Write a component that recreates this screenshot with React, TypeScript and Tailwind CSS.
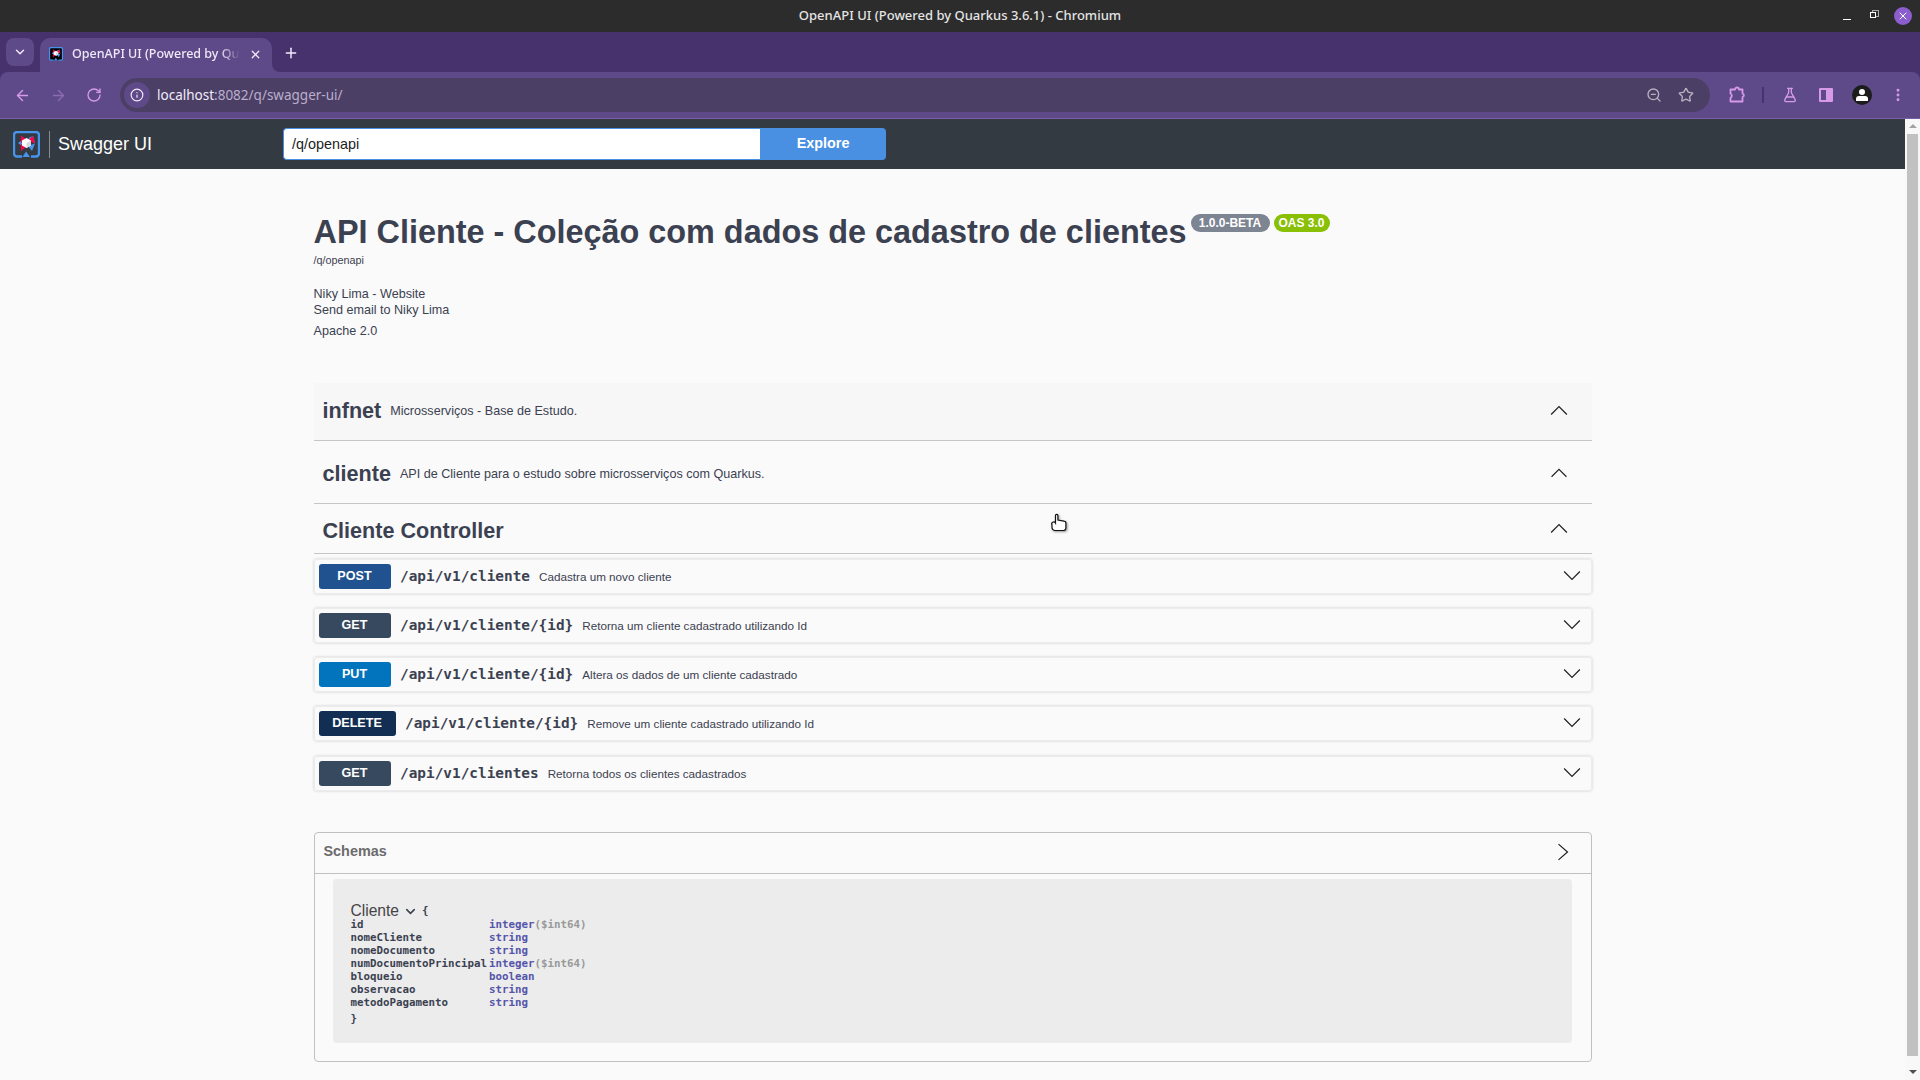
import React from 'react';
import { ArrowLeft, ArrowRight, ChevronDown, Info, MoreVertical, Plus, RotateCw, Star, X, FlaskConical, ZoomOut } from 'lucide-react';

const SANS = 'font-["Liberation_Sans",Arial,sans-serif]';
const MONO = 'font-["DejaVu_Sans_Mono",monospace]';

function QuarkusLogo({ size, fill = 'none' }: { size: number; fill?: string }) {
  return (
    <svg width={size} height={size} viewBox="0 0 27 27">
      <path d="M9 25.5 H4 a3 3 0 0 1 -3 -3 V4 a3 3 0 0 1 3 -3 H23 a3 3 0 0 1 3 3 V22.5 a3 3 0 0 1 -3 3 H18" fill={fill} stroke="#4695eb" strokeWidth="2.4" />
      <path d="M9.5 26 L13 20.5 L17 26 Z" fill="#4695eb" />
      <path d="M5 12 L12 7 V17 Z" fill="#4695eb" />
      <path d="M15 7 L20 5 L22 12 Z" fill="#4695eb" />
      <path d="M8 4.5 L14 9 L8 12 Z" fill="#ff004a" />
      <path d="M22 12.5 L15 9 L20 5 Z" fill="#ff004a" />
      <path d="M8 20 L14 15 L8 13 Z" fill="#ff004a" />
      <path d="M22 12.5 L15 15 L19 20 Z" fill="#4695eb" />
      <path d="M13.5 7 L18 9.5 V14.5 L13.5 17 L9 14.5 V9.5 Z" fill="#ffffff" />
      <path d="M13.5 12 L18 9.5 V14.5 L13.5 17 Z" fill="#d5d8de" />
    </svg>
  );
}

function ChevronThin({ dir, className }: { dir: 'up' | 'down' | 'right'; className?: string }) {
  const d = dir === 'up' ? 'M1 12 L8 5 L15 12' : dir === 'down' ? 'M1 4 L8 11 L15 4' : 'M4 1 L12 8 L4 15';
  return (
    <svg width="18" height="18" viewBox="0 0 16 16" fill="none" stroke="#222" strokeWidth="1.1" className={className}>
      <path d={d} />
    </svg>
  );
}

function TagSection({ name, desc, className, textClass, chevronClass }: { name: string; desc?: string; className: string; textClass?: string; chevronClass?: string }) {
  return (
    <div className={`flex items-center border-b border-[#c4c5c9] pl-[9px] pr-[24px] ${className}`}>
      <div className={`flex items-center ${textClass || ''}`}>
        <span className="text-[21.6px] font-bold text-[#3b4151]">{name}</span>
        {desc && <span className="ml-[9px] text-[12.6px] text-[#3b4151]">{desc}</span>}
      </div>
      <ChevronThin dir="up" className={`ml-auto ${chevronClass || ''}`} />
    </div>
  );
}

const endpoints = [
  { method: 'POST', path: '/api/v1/cliente', desc: 'Cadastra um novo cliente', color: 'bg-[#20528f]', badge: 'w-[72px]' },
  { method: 'GET', path: '/api/v1/cliente/{id}', desc: 'Retorna um cliente cadastrado utilizando Id', color: 'bg-[#36495e]', badge: 'w-[72px]' },
  { method: 'PUT', path: '/api/v1/cliente/{id}', desc: 'Altera os dados de um cliente cadastrado', color: 'bg-[#0274bd]', badge: 'w-[72px]' },
  { method: 'DELETE', path: '/api/v1/cliente/{id}', desc: 'Remove um cliente cadastrado utilizando Id', color: 'bg-[#122e52]', badge: 'w-[77px]' },
  { method: 'GET', path: '/api/v1/clientes', desc: 'Retorna todos os clientes cadastrados', color: 'bg-[#36495e]', badge: 'w-[72px]' },
];

const fields = [
  { name: 'id', type: 'integer', format: '($int64)' },
  { name: 'nomeCliente', type: 'string' },
  { name: 'nomeDocumento', type: 'string' },
  { name: 'numDocumentoPrincipal', type: 'integer', format: '($int64)' },
  { name: 'bloqueio', type: 'boolean' },
  { name: 'observacao', type: 'string' },
  { name: 'metodoPagamento', type: 'string' },
];

function BrowserChrome() {
  return (
    <div className="bg-[#47326e]">
      <div className="relative flex h-[32px] items-center justify-center bg-[#2c2c2c]">
        <span className='font-["Noto_Sans",sans-serif] text-[13px] font-medium text-[#e4e4e4]'>OpenAPI UI (Powered by Quarkus 3.6.1) - Chromium</span>
        <div className="absolute right-[8px] top-[7px] flex items-center">
          <div className="mr-[19px] h-[1px] w-[8px] translate-y-[3px] bg-white" />
          <div className="relative mr-[16px] h-[8px] w-[8px]">
            <div className="absolute left-[2px] top-[-2px] h-[7px] w-[7px] border border-[#aaa]" />
            <div className="absolute left-0 top-0 h-[6px] w-[6px] border border-white bg-[#2c2c2c]" />
          </div>
          <div className="flex h-[18px] w-[18px] items-center justify-center rounded-full bg-[#8b5dcf]">
            <X size={12} strokeWidth={2} color="#fff" />
          </div>
        </div>
      </div>
      <div className="flex h-[40px] items-end pl-[6px]">
        <div className="mb-[6px] flex h-[28px] w-[28px] items-center justify-center rounded-[8px] bg-[#5e4a88]">
          <ChevronDown size={14} strokeWidth={2.5} color="#f0e8fa" />
        </div>
        <div className="relative ml-[6px] flex h-[34px] w-[232px] items-center rounded-t-[10px] bg-[#5e4a88] pb-[2px] pl-[9px]">
          <QuarkusLogo size={14} fill="#000" />
          <span className='ml-[9px] w-[168px] overflow-hidden whitespace-nowrap font-["Noto_Sans",sans-serif] text-[12.5px] font-medium text-[#efe8f8] [mask-image:linear-gradient(to_right,black_88%,transparent)]'>OpenAPI UI (Powered by Qu</span>
          <X size={13} strokeWidth={2.4} color="#f0e8fa" className="ml-[9px]" />
          <div className="absolute bottom-0 right-[-8px] h-[8px] w-[8px] bg-[#5e4a88]">
            <div className="h-full w-full rounded-bl-[8px] bg-[#47326e]" />
          </div>
        </div>
        <div className="mb-[11px] ml-[11px]">
          <Plus size={16} strokeWidth={2.2} color="#f2ecfb" />
        </div>
      </div>
      <div className="flex h-[47px] items-center rounded-t-[8px] border-b border-[#7b5ea8] bg-[#5e4a88] pl-[13.5px]">
        <ArrowLeft size={17} strokeWidth={2} color="#d79ae8" />
        <ArrowRight size={17} strokeWidth={2} color="#8c6bb0" className="ml-[19px]" />
        <RotateCw size={16} strokeWidth={2} color="#d79ae8" className="ml-[19.5px]" />
        <div className="ml-[18px] flex h-[34px] w-[1590px] items-center rounded-full bg-[#4c3f66] pl-[4px]">
          <div className="flex h-[26px] w-[26px] items-center justify-center rounded-full bg-[#5e4a88]">
            <Info size={14} strokeWidth={2} color="#f2ecfb" />
          </div>
          <span className='ml-[7px] font-["Noto_Sans",sans-serif] text-[13.5px] text-[#f2ecfb]'>localhost<span className="text-[#b9aecb]">:8082/q/swagger-ui/</span></span>
          <ZoomOut size={16} strokeWidth={2} color="#b8b3c0" className="ml-auto" />
          <Star size={16} strokeWidth={2} color="#b8b3c0" className="ml-[16px] mr-[16px]" />
        </div>
        <svg width="18" height="18" viewBox="0 0 18 18" fill="none" stroke="#d79ae8" strokeWidth="1.8" strokeLinejoin="round" className="ml-[18px]">
          <path d="M2.5 3.5 H7 a2 2 0 0 1 4 0 H14.5 V7.5 a1.8 1.8 0 0 1 0 3.5 V15.5 H2.5 V12 a2.6 2.6 0 0 0 0 -4.5 Z" />
        </svg>
        <div className="ml-[16px] h-[16px] w-[2px] bg-[#47326e]" />
        <FlaskConical size={16} strokeWidth={2} color="#d79ae8" className="ml-[18px]" />
        <div className="ml-[21px] flex h-[14px] w-[14px] overflow-hidden rounded-[1px] border-2 border-[#d79ae8]">
          <div className="ml-auto h-full w-[5px] bg-[#d79ae8]" />
        </div>
        <div className="relative ml-[19px] flex h-[20px] w-[20px] items-center justify-center overflow-hidden rounded-full bg-[#1c1c1c]">
          <div className="absolute top-[4px] h-[6px] w-[6px] rounded-full bg-white" />
          <div className="absolute top-[11px] h-[5px] w-[12px] rounded-t-[3px] bg-white" />
        </div>
        <MoreVertical size={16} strokeWidth={2.4} color="#d79ae8" className="ml-[18px]" />
      </div>
    </div>
  );
}

function Scrollbar() {
  return (
    <div className="flex w-[15px] shrink-0 flex-col items-center bg-[#f8f8f8]">
      <div className="mb-[6px] mt-[5px] h-0 w-0 border-x-[4px] border-b-[4px] border-x-transparent border-b-[#a3a3a3]" />
      <div className="h-[922px] w-[11px] bg-[#c1c1c1]" />
      <div className="mt-[14px] h-0 w-0 border-x-[4px] border-t-[4px] border-x-transparent border-t-[#505050]" />
    </div>
  );
}

export default function App() {
  return (
    <div className={`relative flex h-screen w-full flex-col overflow-hidden bg-[#fafafa] ${SANS}`}>
      <BrowserChrome />
      <div className="flex min-h-0 flex-1">
        <div className="min-w-0 flex-1">
          <header className="flex h-[50px] items-center bg-[#343a41] pl-[13px]">
            <QuarkusLogo size={27} />
            <div className="ml-[9px] h-[27px] w-px bg-[#888c90]" />
            <span className="ml-[8px] text-[18px] text-white">Swagger UI</span>
            <div className="ml-[131px] flex h-[32px] w-[603px]">
              <div className="flex w-[477px] items-center rounded-l-[4px] border border-r-0 border-[#4990e2] bg-white pl-[8px] pt-[2px] text-[14.4px] text-[#222]">/q/openapi</div>
              <div className="flex flex-1 items-center justify-center rounded-r-[4px] bg-[#4990e2] text-[14.4px] font-bold text-white">Explore</div>
            </div>
          </header>

          <main className="mx-auto w-[1278px]">
            <section className="pt-[44.5px] text-[#3b4151]">
              <div className="flex items-start">
                <h1 className="text-[32.4px] font-bold leading-[37px]">API Cliente - Coleção com dados de cadastro de clientes</h1>
                <span className="ml-[4px] mt-[0.5px] flex h-[18px] w-[79px] items-center justify-center rounded-full bg-[#7d8492] text-[12px] font-bold text-white">1.0.0-BETA</span>
                <span className="ml-[4px] mt-[0.5px] flex h-[18px] w-[56px] items-center justify-center rounded-full bg-[#89bf04] text-[12px] font-bold text-white">OAS 3.0</span>
              </div>
              <div className="mt-[2.5px] text-[10.8px] leading-[14px]">/q/openapi</div>
              <div className="mt-[19px] text-[12.6px] leading-[16px]">Niky Lima - Website</div>
              <div className="text-[12.6px] leading-[16px]">Send email to Niky Lima</div>
              <div className="mt-[4.5px] text-[12.6px] leading-[16px]">Apache 2.0</div>
            </section>

            <div className="mt-[44px]">
              <TagSection name="infnet" desc="Microsserviços - Base de Estudo." className="h-[58px] bg-[#f7f7f7]" chevronClass="mb-[2px]" />
              <TagSection name="cliente" desc="API de Cliente para o estudo sobre microsserviços com Quarkus." className="h-[63px]" textClass="pt-[5px]" chevronClass="pt-[1px]" />
              <TagSection name="Cliente Controller" className="h-[50px]" textClass="pt-[7px]" />
            </div>

            <div className="mt-[5px] flex flex-col gap-[14.25px]">
              {endpoints.map((ep, i) => (
                <div key={i} className="flex h-[35px] items-center rounded-[3px] border border-[#ececec] pl-[4px] pr-[9.5px] shadow-[0_0_3px_rgba(0,0,0,0.19)]">
                  <div className={`flex h-[25px] items-center justify-center rounded-[3px] text-[12.6px] font-bold text-white ${ep.color} ${ep.badge}`}>{ep.method}</div>
                  <span className={`ml-[9.5px] pt-[1px] text-[14.4px] font-bold text-[#3b4151] ${MONO}`}>{ep.path}</span>
                  <span className="ml-[9px] pt-[1px] text-[11.7px] text-[#3b4151]">{ep.desc}</span>
                  <ChevronThin dir="down" className="ml-auto mb-[1px]" />
                </div>
              ))}
            </div>

            <section className="mt-[41px] h-[230px] rounded-[4px] border border-[#bfc0c3]">
              <div className="flex h-[41px] items-center border-b border-[#bfc0c3] pb-[2px] pl-[9px] pr-[19px]">
                <span className="text-[14.4px] font-bold text-[#6b6b6b]">Schemas</span>
                <ChevronThin dir="right" className="ml-auto" />
              </div>
              <div className={`mx-[18.5px] mt-[5px] h-[164px] rounded-[4px] bg-[#ececec] pl-[17.5px] pt-[25px] text-[10.8px] font-bold text-[#3b4151] ${MONO}`}>
                <div className="flex h-[15px] items-center">
                  <span className={`text-[15.6px] font-normal text-[#444] ${SANS}`}>Cliente</span>
                  <ChevronDown size={15} strokeWidth={2.5} className="ml-[4px]" />
                  <span className="ml-[4px]">{'{'}</span>
                </div>
                <table className="mt-[-1px] border-collapse">
                  <tbody>
                    {fields.map((f) => (
                      <tr key={f.name} className="h-[13px] leading-[13px]">
                        <td className="w-[138.5px] p-0">{f.name}</td>
                        <td className="p-0 text-[#55a]">
                          {f.type}
                          {f.format && <span className="text-[#999]">{f.format}</span>}
                        </td>
                      </tr>
                    ))}
                  </tbody>
                </table>
                <div className="mt-[3px] leading-[13px]">{'}'}</div>
              </div>
            </section>
          </main>
        </div>
        <Scrollbar />
      </div>

      <svg width="18" height="19" viewBox="0 0 18 19" className="absolute left-[1050px] top-[513px] drop-shadow-[1px_1px_1px_rgba(0,0,0,0.4)]">
        <path d="M5.5 10 V2.5 a1.2 1.2 0 0 1 2.4 0 V7 l6 1.2 a2 2 0 0 1 2 2 V15 a2.5 2.5 0 0 1 -2.5 2.5 H5 a3 3 0 0 1 -3 -3 V12 a2 2 0 0 1 3.5 -2 Z" fill="#fff" stroke="#111" strokeWidth="1.2" />
      </svg>
    </div>
  );
}
